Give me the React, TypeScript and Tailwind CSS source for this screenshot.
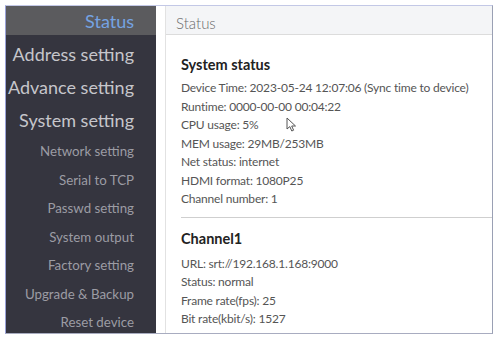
import React from "react";

const big = ["Address setting", "Advance setting", "System setting"];
const small = [
  "Network setting",
  "Serial to TCP",
  "Passwd setting",
  "System output",
  "Factory setting",
  "Upgrade & Backup",
  "Reset device",
];

const sys = [
  "Device Time: 2023-05-24 12:07:06 (Sync time to device)",
  "Runtime: 0000-00-00 00:04:22",
  "CPU usage: 5%",
  "MEM usage: 29MB/253MB",
  "Net status: internet",
  "HDMI format: 1080P25",
  "Channel number: 1",
];

const ch = [
  "URL: srt://192.168.1.168:9000",
  "Status: normal",
  "Frame rate(fps): 25",
  "Bit rate(kbit/s): 1527",
];

export default function App() {
  return (
    <div
      className="w-[498px] h-[338px] bg-white overflow-hidden pt-[5px] pl-[5px] relative"
      style={{ fontFamily: "Lato, 'Open Sans', sans-serif" }}
    >
      <div className="w-[488px] h-[329px] border border-t-[#c3c8e6] border-l-[#9aa2d8] border-r-[#9aa0b4] border-b-[#a8acc0] flex overflow-hidden">
        {/* sidebar */}
        <div className="w-[150px] bg-[#35353f] flex flex-col shrink-0">
          <div className="h-[29px] shrink-0 bg-[#5b5b5e] flex items-center justify-end pr-[22px] pt-[2px] text-[18px] text-[#75a3e3]">
            Status
          </div>
          <div className="h-[3px] shrink-0" />
          {big.map((t) => (
            <div
              key={t}
              className="h-[33px] shrink-0 flex items-center justify-end pr-[22px] text-[18px] text-[#c6c6cb] whitespace-nowrap"
            >
              {t}
            </div>
          ))}
          <div className="h-[1px] shrink-0" />
          {small.map((t) => (
            <div
              key={t}
              className="h-[28.5px] shrink-0 flex items-center justify-end pr-[22px] text-[13.3px] text-[#9c9ca4] whitespace-nowrap"
            >
              {t}
            </div>
          ))}
        </div>
        <div className="w-[9px] shrink-0 bg-white" />
        {/* content */}
        <div className="flex-1 border-l border-[#e2e2e2] flex flex-col">
          <div className="h-[29px] shrink-0 bg-[#f4f5f7] border-b border-[#dcdcdc] flex items-center pl-[10px] pt-[6px] text-[15px] text-[#6b6b6b] font-light">
            Status
          </div>
          <div className="pl-[15px] pt-[20px]">
            <div className="text-[14.5px] font-bold text-[#222] leading-[20px] mb-[4px]">
              System status
            </div>
            {sys.map((t) => (
              <div
                key={t}
                className="text-[12px] tracking-[-0.2px] text-[#555] leading-[18.5px] whitespace-nowrap"
              >
                {t}
              </div>
            ))}
          </div>
          <div className="ml-[15px] mt-[8px] border-t border-[#cfcfcf]" />
          <div className="pl-[15px] pt-[11px]">
            <div className="text-[14.5px] font-bold text-[#222] leading-[20px] mb-[6px]">
              Channel1
            </div>
            {ch.map((t) => (
              <div
                key={t}
                className="text-[12px] tracking-[-0.2px] text-[#555] leading-[18.5px] whitespace-nowrap"
              >
                {t}
              </div>
            ))}
          </div>
        </div>
      </div>
      <svg
        className="absolute left-[286px] top-[117px]"
        width="12"
        height="16"
        viewBox="0 0 12 16"
      >
        <path
          d="M1 1 L1 12 L3.8 9.6 L5.8 14 L7.6 13.2 L5.7 9 L9.5 9 Z"
          fill="white"
          stroke="#555"
          strokeWidth="1"
          strokeLinejoin="round"
        />
      </svg>
    </div>
  );
}
